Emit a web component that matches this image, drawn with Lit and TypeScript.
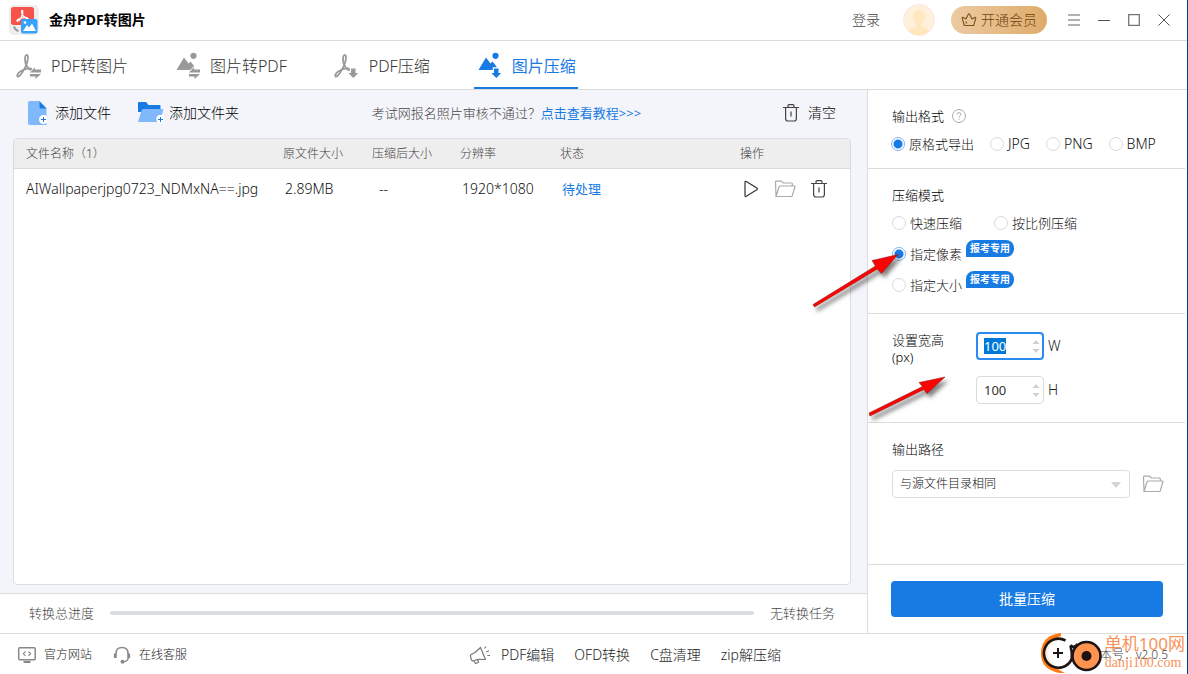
import { LitElement, html, css, svg } from "lit";
import { customElement, state, query } from "lit/decorators.js";
import { classMap } from "lit/directives/class-map.js";

const acrobat = svg`<path fill="none" stroke="currentColor" stroke-width="1.8" stroke-linejoin="round"
  d="M2.5 26.5C1.5 24.5 4 21.5 8 20S16.5 17.5 17 19.5S13.5 19.5 11.5 15.5S9.5 5.5 11.5 5S13.5 10 11 15.5S4.500 27.500 2.500 26.500Z"/>`;
const mountain = svg`<path fill="currentColor" d="M2.500 20L10 7.500L14.500 13.500L16.500 11.500L20.500 16.500V20Z"/><circle cx="19.500" cy="5.800" r="3.100" fill="currentColor"/>`;
const swap = svg`<path fill="currentColor" stroke="#fff" stroke-width="1.600" paint-order="stroke"
  d="M15 22.600L20 17.300V19.600H26V22.600ZM15 23.900H26L20.500 29V26.600H15Z"/>`;
const down = svg`<path fill="currentColor" stroke="#fff" stroke-width="2.400" paint-order="stroke" d="M18 18.500H22.500V23H25.200L20.300 28L15.400 23H18Z"/>`;

const trash = html`<svg class="ico" width="18" height="20" viewBox="0 0 18 20" fill="none" stroke="#444" stroke-width="1.200">
  <path d="M1 4.500H17M6 4.300V2.700Q6 1.700 7 1.700H11Q12 1.700 12 2.700V4.300M3.600 4.500V15.500Q3.600 18 6 18H12Q14.400 18 14.400 15.500V4.500M9 8.500V13.500"/></svg>`;
const folder = html`<svg class="ico" width="22" height="18" viewBox="0 0 22 18" fill="none" stroke="#aaa" stroke-width="1.200" stroke-linejoin="round">
  <path d="M2 16.500L1.500 2Q1.500 1.200 2.300 1.200H7.500L9.300 3H17.500Q18.300 3 18.300 3.800V6M2 16.500L5 7Q5.300 6 6.300 6H20.300Q21.200 6 20.900 7L18.300 15.700Q18 16.500 17.200 16.500Z"/></svg>`;

const TABS = [
  { label: "PDF转图片", icon: [acrobat, swap] },
  { label: "图片转PDF", icon: [mountain, swap] },
  { label: "PDF压缩", icon: [acrobat, down] },
  { label: "图片压缩", icon: [mountain, down] },
];

const FILES = [{ name: "AIWallpaperjpg0723_NDMxNA==.jpg", size: "2.89MB", after: "--", res: "1920*1080", status: "待处理" }];

@customElement("app-root")
export class AppRoot extends LitElement {
  @state() private tab = 3;
  @state() private w = 100;
  @state() private h = 100;
  @query("#w") private widthInput!: HTMLInputElement;

  static styles = css`
    :host {
      display: block;
      font-family: "Noto Sans", "Noto Sans CJK SC", sans-serif;
      font-size: 13px;
      font-weight: 300;
      line-height: 20px;
      color: #111;
    }
    * { box-sizing: border-box; }
    button, input, select { font: inherit; color: inherit; }
    button { background: none; border: 0; padding: 0; display: flex; align-items: center; white-space: nowrap; cursor: pointer; }
    a { color: inherit; text-decoration: none; white-space: nowrap; }
    svg { display: block; flex: none; }
    h1, h2, p { margin: 0; font-weight: inherit; }
    .window { position: relative; min-height: 100vh; display: flex; flex-direction: column; background: #fff; border-right: 1px solid #0b3d98; overflow: hidden; }

    .titlebar { display: flex; align-items: center; height: 41px; padding: 0 17px 0 9px; border-bottom: 1px solid #dcdcdc; }
    .titlebar h1 { margin-left: 10px; font-size: 14px; font-weight: 700; color: #000; }
    .login { margin-left: auto; margin-right: 23px; font-size: 14px; color: #444; }
    .vip { height: 28px; width: 96px; justify-content: center; gap: 4px; margin: 0 21px 0 16px; border-radius: 14px; background: linear-gradient(90deg, #eccba3, #dfab6a); color: #6b4310; font-size: 14px; }
    .winctl { display: flex; gap: 18px; }

    .tabs { display: flex; gap: 42px; height: 49px; padding-left: 13px; border-bottom: 1px solid #dcdcdc; }
    .tab { height: 48px; padding: 3px 2px 0; gap: 4px; font-size: 16px; color: #333; border-bottom: 2px solid transparent; }
    .tab svg { color: #999; }
    .tab.on, .tab.on svg { color: #187ae3; }
    .tab.on { border-color: #187ae3; font-weight: 400; }

    .body { flex: 1; display: flex; }
    .main { flex: 1; min-width: 0; display: flex; flex-direction: column; background: #f4f5fa; }
    .toolbar { display: flex; align-items: center; justify-content: space-between; height: 48px; padding: 0 31px 2px 27px; font-size: 14px; color: #000; }
    .group { display: flex; gap: 26px; }
    .group button { gap: 8px; }
    .group .adddir { gap: 5px; }
    .clear { gap: 8px; }
    .hint { padding-right: 8px; font-size: 13px; color: #444; white-space: nowrap; }
    .hint a { color: #187ae3; font-weight: 400; }
    .panel { flex: 1; margin: 0 16px 8px 13px; background: #fff; border: 1px solid #dcdcdc; border-radius: 4px; overflow: hidden; }
    table { width: 100%; table-layout: fixed; border-collapse: collapse; }
    th { height: 29px; padding: 2px 0 0 12px; text-align: left; font-size: 12px; font-weight: inherit; color: #444; background: #eee; border-bottom: 1px solid #dcdcdc; }
    td { height: 42px; padding: 0 0 0 14px; font-size: 14px; white-space: nowrap; color: #111; }
    td:first-child { padding-left: 12px; }
    td.after { padding-left: 19px; }
    td.status { font-size: 13px; font-weight: 400; color: #187ae3; }
    .c2 { width: 89px; } .c3 { width: 88px; } .c4 { width: 100px; } .c5 { width: 180px; } .c6 { width: 122px; }
    .ops { display: flex; align-items: center; gap: 14px; }

    .total { display: flex; align-items: center; gap: 16px; height: 40px; padding: 0 32px 2px 29px; background: #fff; border-top: 1px solid #dcdcdc; color: #444; white-space: nowrap; }
    progress { appearance: none; flex: 1; min-width: 0; height: 4px; border: 0; border-radius: 2px; overflow: hidden; background: #d9dde0; }
    progress::-webkit-progress-bar { background: #d9dde0; }
    progress::-webkit-progress-value { background: #187ae3; }

    .side { position: relative; flex: 0 0 320px; display: flex; flex-direction: column; border-left: 1px solid #dcdcdc; background: #fff; }
    .sec { margin-right: 2px; padding: 16px 0 0 23px; border-bottom: 1px solid #dcdcdc; }
    .sec h2 { display: flex; align-items: center; gap: 8px; margin-bottom: 8px; padding-left: 1px; font-size: 13px; color: #000; }
    .formats { display: flex; gap: 16px; padding-bottom: 14px; }
    label.opt { display: flex; align-items: center; gap: 4px; white-space: nowrap; }
    .latin { font-size: 14px; }
    input[type="radio"] { appearance: none; flex: none; width: 14px; height: 14px; margin: 0; border: 1px solid #dadada; border-radius: 50%; background: #fff; }
    input[type="radio"]:checked { border-color: #7fb5f0; background: radial-gradient(circle, #187ae3 4px, #fff 5px); }
    .modes { display: grid; grid-template-columns: 102px 1fr; row-gap: 11px; padding: 0 0 18px 1px; }
    .wide { grid-column: 1 / -1; }
    .badge { align-self: flex-start; margin-top: -4px; padding: 0 4px; font-size: 10px; line-height: 17px; font-weight: 700; color: #fff; background: #187ae3; border-radius: 8px 8px 8px 0; }
    .size { display: grid; grid-template-columns: 84px 1fr; padding: 18px 0 18px 24px; }
    .size p { line-height: 17px; color: #000; }
    .fields { display: grid; gap: 16px; }
    .field { display: flex; align-items: center; gap: 4px; font-size: 14px; color: #222; }
    .num { display: flex; align-items: center; width: 68px; height: 28px; border: 1px solid #dcdcdc; border-radius: 4px; padding: 0 3px 0 7px; }
    .num:focus-within { border: 2px solid #2a8bf2; padding: 0 2px 0 6px; }
    .num input { appearance: textfield; flex: 1; width: 0; min-width: 0; padding: 0; border: 0; outline: 0; background: none; font-size: 13px; font-weight: 400; line-height: 16px; color: #333; }
    .num input::-webkit-inner-spin-button { appearance: none; margin: 0; }
    .num input::selection { background: #0078d7; color: #fff; }
    .spin { display: grid; gap: 3px; }
    .path { flex: 1; padding-left: 23px; }
    .pathrow { display: flex; align-items: center; gap: 12px; margin: 11px 21px 16px 1px; }
    .drop { position: relative; flex: 1; }
    .drop svg { position: absolute; right: 9px; top: 12px; pointer-events: none; }
    select { appearance: none; width: 100%; height: 28px; padding: 0 24px 0 7px; border: 1px solid #dcdcdc; border-radius: 4px; background: #fff; font-size: 12px; }
    .run { padding: 16px 24px 16px 23px; }
    .run button { width: 100%; height: 36px; justify-content: center; border-radius: 4px; background: #187ae3; color: #fff; font-size: 14px; font-weight: 400; }
    .pointers { position: absolute; left: -61px; top: 150px; pointer-events: none; }

    .footer { display: flex; align-items: center; height: 41px; padding: 1px 0 0 17px; border-top: 1px solid #dcdcdc; font-size: 14px; color: #222; }
    .footer a { display: flex; align-items: center; }
    .site { display: flex; gap: 20px; font-size: 12px; }
    .site a { gap: 7px; }
    .more { display: flex; align-items: center; gap: 20px; margin: 0 auto; }
    .more a { gap: 10px; }
    .version { width: 124px; padding-right: 19px; text-align: right; font-size: 12px; color: #444; white-space: nowrap; }
    .mark { position: absolute; right: 2px; bottom: 0; display: flex; align-items: center; gap: 2px; pointer-events: none; color: #f7935a; font-weight: 400; }
    .mark strong { display: block; font-size: 17px; line-height: 20px; font-weight: 400; }
    .mark span { display: block; font-family: "Liberation Serif", serif; font-size: 14px; line-height: 18px; }
  `;

  firstUpdated() {
    this.widthInput.focus();
    this.widthInput.select();
  }

  private numField(id: "w" | "h", name: string) {
    return html`<div class="field">
      <div class="num">
        <input id=${id} type="number" .value=${String(this[id])} @change=${(e: Event) => (this[id] = Number((e.target as HTMLInputElement).value))} />
        <div class="spin">
          <button aria-label="增加" @click=${() => this[id]++}><svg width="8" height="5" viewBox="0 0 8 5"><path fill="#d0d0d0" d="M4 0L7.500 4H.5Z"/></svg></button>
          <button aria-label="减少" @click=${() => this[id]--}><svg width="8" height="5" viewBox="0 0 8 5"><path fill="#d0d0d0" d="M4 5L7.500 1H.5Z"/></svg></button>
        </div>
      </div>
      <label for=${id}>${name}</label>
    </div>`;
  }

  render() {
    return html`<div class="window">
      <header class="titlebar">
        <svg width="30" height="30" viewBox="0 0 30 30">
          <rect width="30" height="30" rx="5" fill="#eeeeef"/>
          <rect x="2" y="2" width="23" height="18" rx="2.500" fill="#f6534b"/>
          <path fill="none" stroke="#fff" stroke-width="1.300" d="M8 16C8 13.500 18 11 19 13.500C19 15 13.500 12 12.800 8S14.500 4.500 13.500 9S9 17 8 16Z"/>
          <path d="M5 21.500Q6 25 9.500 26" fill="none" stroke="#999" stroke-width="2"/>
          <rect x="12" y="14" width="16.500" height="14.500" rx="2" fill="#35a2fb"/>
          <path fill="#fff" d="M14 26L18 20L20 22.500L23 18.500L27 26Z"/><circle cx="16" cy="17.500" r="1.300" fill="#fff"/>
        </svg>
        <h1>金舟PDF转图片</h1>
        <button class="login">登录</button>
        <svg width="32" height="32" viewBox="0 0 32 32">
          <circle cx="16" cy="16" r="15.500" fill="#fff0dc" stroke="#ffe6e0"/>
          <path fill="#ffe7c0" d="M10 12Q10 6 16 6T22 12Q22 17 18.500 20V22.500Q25 24 26 27Q22 31.500 16 31.500T6 27Q7 24 13.500 22.500V20Q10 17 10 12Z"/>
        </svg>
        <button class="vip">
          <svg width="16" height="16" viewBox="0 0 16 16" fill="none" stroke="#7b5117" stroke-width="1.100" stroke-linejoin="round"><path d="M3.300 13.500L1.200 6.200Q1 5 2.200 5.500L5 7L7.300 2.300Q8 1.500 8.700 2.300L11 7L13.800 5.500Q15 5 14.800 6.200L12.700 13.500ZM5 9.500L5.600 11.500"/></svg>
          开通会员
        </button>
        <div class="winctl">
          <button aria-label="菜单"><svg width="12" height="14" viewBox="0 0 12 14" stroke="#999" stroke-width="1.300"><path d="M0 2H12M0 7H12M0 12H12"/></svg></button>
          <button aria-label="最小化"><svg width="12" height="14" viewBox="0 0 12 14" stroke="#555"><path d="M0 7.500H12"/></svg></button>
          <button aria-label="最大化"><svg width="12" height="14" viewBox="0 0 12 14" fill="none" stroke="#777" stroke-width="1.300"><path d="M.7 1.700H11.300V12.300H.7Z"/></svg></button>
          <button aria-label="关闭"><svg width="12" height="14" viewBox="0 0 12 14" stroke="#555"><path d="M.5 1.500L11.500 12.500M11.500 1.500L.5 12.500"/></svg></button>
        </div>
      </header>

      <nav class="tabs">
        ${TABS.map((t, i) => html`<button class=${classMap({ tab: true, on: i === this.tab })} @click=${() => (this.tab = i)}>
          <svg width="32" height="32" viewBox="0 0 32 32">${t.icon}</svg>${t.label}</button>`)}
      </nav>

      <div class="body">
        <main class="main">
          <div class="toolbar">
            <div class="group">
              <button>
                <svg width="20" height="26" viewBox="0 0 20 26"><path fill="#7fb8fb" d="M3 1H12.500L19.500 8V25H3Q1 25 1 23V3Q1 1 3 1Z"/><path fill="#187ae3" d="M12.500 1.500L19.500 8.500H14Q12.500 8.500 12.500 7Z"/><circle cx="16.500" cy="19.500" r="4.500" fill="#fff"/><path stroke="#187ae3" d="M14 19.500H19M16.500 17V22"/></svg>
                添加文件</button>
              <button class="adddir">
                <svg width="27" height="26" viewBox="0 0 27 26"><path fill="#187ae3" d="M1 3Q1 2 2 2H9L11.500 5H22.500Q23.500 5 23.500 6V12H1Z"/><path fill="#7fb8fb" d="M1 22L4.500 10.500Q5 9 6.500 9H25.500Q26.500 9 26.200 10L23.500 20.500Q23 22 21.500 22Z"/><circle cx="23.500" cy="19" r="4.300" fill="#fff"/><path stroke="#187ae3" d="M21 19.500H26M23.500 17V22"/></svg>
                添加文件夹</button>
            </div>
            <p class="hint">考试网报名照片审核不通过？<a href="#">点击查看教程&gt;&gt;&gt;</a></p>
            <button class="clear">${trash}清空</button>
          </div>
          <div class="panel">
            <table>
              <thead><tr><th>文件名称（1）</th><th class="c2">原文件大小</th><th class="c3">压缩后大小</th><th class="c4">分辨率</th><th class="c5">状态</th><th class="c6">操作</th></tr></thead>
              <tbody>
                ${FILES.map((f) => html`<tr>
                  <td>${f.name}</td><td>${f.size}</td><td class="after">${f.after}</td><td>${f.res}</td><td class="status">${f.status}</td>
                  <td><div class="ops">
                    <button aria-label="开始"><svg width="18" height="18" viewBox="0 0 18 18" fill="none" stroke="#333" stroke-width="1.200" stroke-linejoin="round"><path d="M3 2.200Q3 .8 4.300 1.500L14.800 8Q15.800 9 14.800 9.800L4.300 16.300Q3 17 3 15.600Z"/></svg></button>
                    <button aria-label="打开目录">${folder}</button>
                    <button aria-label="删除">${trash}</button>
                  </div></td></tr>`)}
              </tbody>
            </table>
          </div>
          <div class="total"><label for="all">转换总进度</label><progress id="all" max="100" value="0"></progress><span>无转换任务</span></div>
        </main>

        <aside class="side">
          <section class="sec">
            <h2>输出格式 <svg width="14" height="14" viewBox="0 0 14 14" fill="none" stroke="#aaa"><circle cx="7" cy="7" r="6.500"/><path d="M5 5.500Q5 3.600 7 3.600T9 5.400Q9 6.300 7.800 7T7 8.500M7 9.700V10.800"/></svg></h2>
            <div class="formats">
              <label class="opt"><input type="radio" name="fmt" checked />原格式导出</label>
              ${["JPG", "PNG", "BMP"].map((f) => html`<label class="opt latin"><input type="radio" name="fmt" />${f}</label>`)}
            </div>
          </section>
          <section class="sec">
            <h2>压缩模式</h2>
            <div class="modes">
              <label class="opt"><input type="radio" name="mode" />快速压缩</label>
              <label class="opt"><input type="radio" name="mode" />按比例压缩</label>
              <label class="opt wide"><input type="radio" name="mode" checked />指定像素<span class="badge">报考专用</span></label>
              <label class="opt wide"><input type="radio" name="mode" />指定大小<span class="badge">报考专用</span></label>
            </div>
          </section>
          <section class="sec size">
            <p>设置宽高<br />(px)</p>
            <div class="fields">${this.numField("w", "W")}${this.numField("h", "H")}</div>
          </section>
          <section class="sec path">
            <h2><label for="dir">输出路径</label></h2>
            <div class="pathrow">
              <div class="drop">
                <select id="dir"><option>与源文件目录相同</option></select>
                <svg width="10" height="6" viewBox="0 0 10 6"><path fill="#d4d4d4" d="M0 0H10L6 5Q5 6 4 5Z"/></svg>
              </div>
              <button aria-label="选择目录">${folder}</button>
            </div>
          </section>
          <div class="run"><button>批量压缩</button></div>
          <svg class="pointers" width="150" height="190" viewBox="807 240 150 190">
            <defs>
              <filter id="soft" x="-20%" y="-20%" width="150%" height="150%" color-interpolation-filters="sRGB"><feDropShadow dx="3" dy="4" stdDeviation="2" flood-color="#000" flood-opacity=".5"/></filter>
            </defs>
            <g filter="url(#soft)" fill="#fb0404" stroke="#8a1010" stroke-width=".5" stroke-linejoin="round">
              <path d="M813 304.500L875.500 266L872 260.500L898 254.500L881.500 273.500L877.500 269L814.500 307Z"/>
              <path d="M869 413L922.500 386.500L919 382.500L945 377L927 393.500L924 389.500L870 416Z"/>
            </g>
          </svg>
        </aside>
      </div>

      <footer class="footer">
        <div class="site">
          <a href="#"><svg width="20" height="18" viewBox="0 0 20 18" fill="none" stroke="#888" stroke-width="1.500"><rect x="1.700" y="1.700" width="16.500" height="12" rx="1"/><path d="M6.500 16H13.500" stroke-width="2"/><path d="M8.500 5.500L6.300 7.700L8.500 9.900M11.500 5.500L13.700 7.700L11.500 9.900" stroke-width="1.100"/></svg>官方网站</a>
          <a href="#"><svg width="20" height="18" viewBox="0 0 20 18" fill="none" stroke="#888" stroke-width="1.500"><path d="M4 8.500V7.500Q4 1.500 10 1.500T16 7.500V8.500"/><path d="M3.300 7.500V12M16.700 7.500V12" stroke-width="2.800"/><path d="M16.500 11Q16 15.500 11 16"/><circle cx="10.500" cy="15.800" r="1.200" fill="#888"/></svg>在线客服</a>
        </div>
        <div class="more">
          <a href="#"><svg width="22" height="20" viewBox="0 0 22 20" fill="none" stroke="#777" stroke-width="1.200" stroke-linejoin="round"><path d="M1.500 11.500Q1 10 2.500 9.200L6 7.500L11.500 2.500L16.500 14.500L9 14.300L5 15.800Q3 16.500 2.300 14.500ZM5 15.800L6.500 18.500L9.500 17.500L8.500 14.500M15.500 3.500L17 1.500M17.300 7L20 5.800M18.300 10.500H21"/></svg>PDF编辑</a>
          <a href="#">OFD转换</a><a href="#">C盘清理</a><a href="#">zip解压缩</a>
        </div>
        <div class="version">版本号：v2.0.5</div>
      </footer>

      <div class="mark">
        <svg width="64" height="42" viewBox="0 0 64 42">
          <path d="M22 1Q3 3 2 20T20 41L26 41Q9 33 9 21T22 4Z" fill="#ff7a14"/>
          <circle cx="19" cy="21" r="13.500" fill="#fff" fill-opacity=".85"/>
          <path d="M26.500 8.500A14.500 14.500 0 1 0 32 28.500Q34 24 31.500 14M31.500 13Q34 17 38.500 12" fill="none" stroke="#1f1414" stroke-width="2.600"/>
          <path d="M14 21H24M19 16V26" stroke="#1f1414" stroke-width="2"/>
          <circle cx="47.500" cy="24" r="14" fill="#ff9450" stroke="#1f1414" stroke-width="2.600"/>
          <circle cx="47.500" cy="24" r="5" fill="#1f1414"/>
        </svg>
        <div><strong>单机100网</strong><span>danji100.com</span></div>
      </div>
    </div>`;
  }
}
